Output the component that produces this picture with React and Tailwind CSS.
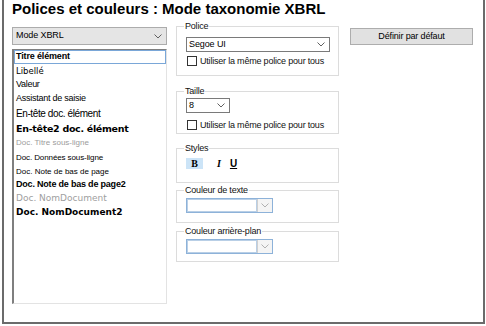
import React from 'react';

const Chevron = ({ color = '#606060' }) => (
  <svg width="8" height="5" viewBox="0 0 8 5" className="shrink-0">
    <path d="M0.5 0.5L4 4L7.5 0.5" fill="none" stroke={color} strokeWidth="1" />
  </svg>
);

const Checkbox = ({ label }) => (
  <div className="flex items-center h-[10px]">
    <div className="w-[10px] h-[10px] border border-[#333] bg-white ml-[1px]" />
    <span className="ml-[3px] text-[9px] leading-[10px] tracking-[-0.2px] text-[#111]">{label}</span>
  </div>
);

const ColorCombo = () => (
  <div className="flex w-[87px] h-[15px] border border-[#8db2d9] bg-white">
    <div className="flex-1 border border-[#b9cfe6]" />
    <div className="w-[15px] border-l border-[#cfcfcf] bg-[#f4f4f4] flex items-center justify-center">
      <Chevron color="#b0b0b0" />
    </div>
  </div>
);

const Group = ({ label, className = '', children }) => (
  <fieldset className={`border border-[#dcdcdc] pl-[9px] ${className}`}>
    <legend className="-ml-[2px] px-[1px] text-[9px] leading-[11px] tracking-[-0.2px] text-[#111]">
      {label}
    </legend>
    {children}
  </fieldset>
);

const items = [
  { t: 'Titre élément', h: 'h-[14px]', c: "font-['Liberation_Sans'] font-bold text-[9px] tracking-[-0.15px]", focus: true },
  { t: 'Libellé', h: 'h-[14px]', c: "font-['DejaVu_Sans'] text-[8.5px]" },
  { t: 'Valeur', h: 'h-[14px]', c: 'text-[9px] tracking-[-0.3px]' },
  { t: 'Assistant de saisie', h: 'h-[13px]', c: 'text-[9px] tracking-[-0.25px]' },
  { t: 'En-tête doc. élément', h: 'h-[17px]', c: 'text-[10px] tracking-[-0.4px]' },
  { t: 'En-tête2 doc. élément', h: 'h-[14px]', c: "font-['DejaVu_Sans'] font-bold text-[9.5px] tracking-[-0.3px]" },
  { t: 'Doc. Titre sous-ligne', h: 'h-[14px]', c: 'text-[8px] text-[#9c9c9c]' },
  { t: 'Doc. Données sous-ligne', h: 'h-[15px]', c: 'text-[8px] tracking-[-0.1px]' },
  { t: 'Doc. Note de bas de page', h: 'h-[13px]', c: 'text-[8px]' },
  { t: 'Doc. Note de bas de page2', h: 'h-[14px]', c: 'font-bold text-[9px] tracking-[-0.2px]' },
  { t: 'Doc. NomDocument', h: 'h-[14px]', c: "font-['DejaVu_Sans'] text-[9px] text-[#a0a0a0]" },
  { t: 'Doc. NomDocument2', h: 'h-[13px]', c: "font-['DejaVu_Sans'] font-bold text-[9px]" },
];

export default function App() {
  return (
    <div className="w-[486px] h-[326px] bg-white font-['Liberation_Sans',Arial,sans-serif] text-black overflow-hidden">
      <div className="ml-[2px] w-[483px] h-[324px] border-l-2 border-r-2 border-b-2 border-[#6b6b6b] pl-[8px]">
        <h1 className="text-[15px] leading-[17px] font-bold whitespace-nowrap">
          Polices et couleurs : Mode taxonomie XBRL
        </h1>

        <div className="flex items-start mt-[4px]">
          {/* left column */}
          <div className="w-[155px] mt-[6px]">
            <div className="h-[18px] bg-[#e5e5e5] border border-[#acacac] flex items-center justify-between pl-[3px] pr-[4px]">
              <span className="text-[9px] tracking-[-0.1px]">Mode XBRL</span>
              <Chevron />
            </div>
            <div className="mt-[4px] h-[255px] border-t border-l-2 border-[#7f7f7f] border-r border-b border-r-[#e3e3e3] border-b-[#e3e3e3] bg-white">
              {items.map((it) => (
                <div
                  key={it.t}
                  className={`${it.h} flex items-center whitespace-nowrap ${
                    it.focus ? 'border border-[#7aa7d8] pl-[1px]' : 'pl-[2px]'
                  } ${it.c}`}
                >
                  {it.t}
                </div>
              ))}
            </div>
          </div>

          {/* right column */}
          <div className="w-[163px] ml-[9px] flex flex-col">
            <Group label="Police" className="pb-[9px]">
              <div className="mt-[5px] w-[144px] h-[15px] border border-[#7a7a7a] flex items-center justify-between pl-[2px] pr-[4px]">
                <span className="text-[9px] tracking-[-0.1px]">Segoe UI</span>
                <Chevron />
              </div>
              <div className="mt-[4px]">
                <Checkbox label="Utiliser la même police pour tous" />
              </div>
            </Group>

            <Group label="Taille" className="mt-[10px] pb-[3px]">
              <div className="mt-[1px] w-[44px] h-[15px] border border-[#7a7a7a] flex items-center justify-between pl-[2px] pr-[4px]">
                <span className="text-[9px]">8</span>
                <Chevron />
              </div>
              <div className="mt-[7px]">
                <Checkbox label="Utiliser la même police pour tous" />
              </div>
            </Group>

            <Group label="Styles" className="mt-[9px] pb-[13px]">
              <div className="mt-[4px] h-[11px] flex items-center">
                <div className="w-[17px] h-[11px] bg-[#cce4f7] flex items-center justify-center">
                  <span className="font-['Liberation_Serif'] font-bold text-[10px] leading-[10px]">B</span>
                </div>
                <span className="ml-[14px] font-['Liberation_Serif'] font-bold italic text-[10px] leading-[10px]">I</span>
                <span className="ml-[9px] font-bold text-[10px] leading-[10px] underline">U</span>
              </div>
            </Group>

            <Group label="Couleur de texte" className="mt-[2px] pb-[9px]">
              <div className="mt-[2px]">
                <ColorCombo />
              </div>
            </Group>

            <Group label="Couleur arrière-plan" className="mt-[3px] pb-[7px]">
              <div className="mt-[2px]">
                <ColorCombo />
              </div>
            </Group>
          </div>

          {/* button */}
          <div className="ml-[11px] mt-[7px] w-[123px] h-[17px] bg-[#e1e1e1] border border-[#adadad] flex items-center justify-center">
            <span className="text-[9px] tracking-[-0.15px]">Définir par défaut</span>
          </div>
        </div>
      </div>
    </div>
  );
}
